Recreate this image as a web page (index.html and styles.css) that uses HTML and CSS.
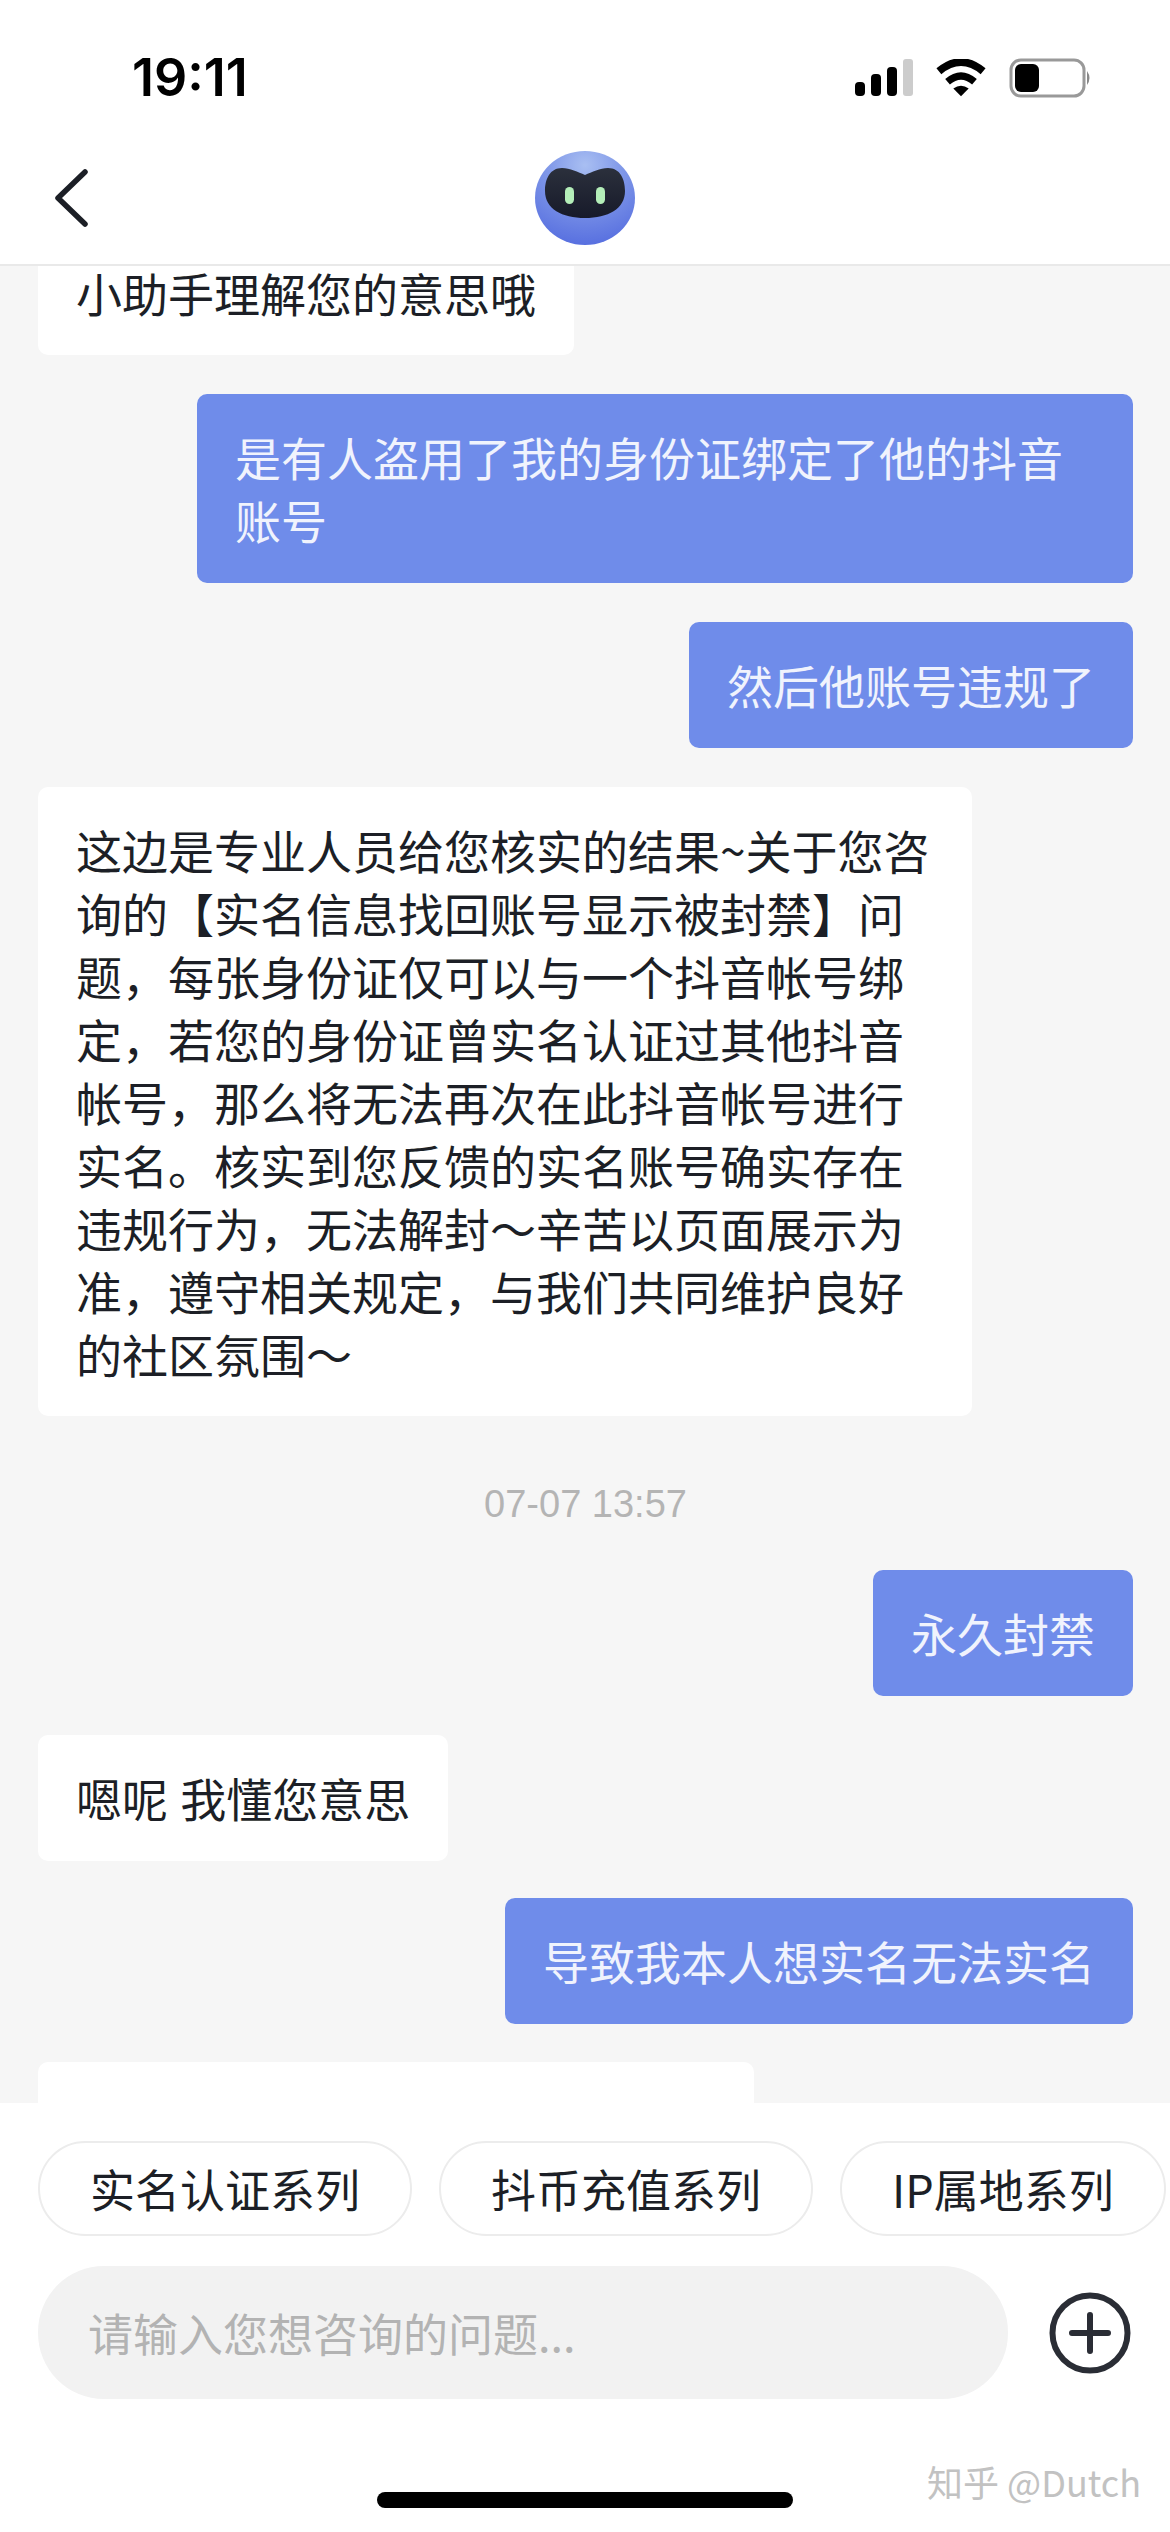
FILE: index.html
```html
<!DOCTYPE html>
<html lang="zh">
<head>
<meta charset="UTF-8">
<meta name="viewport" content="width=device-width, initial-scale=1.0">
<title>chat</title>
<link rel="stylesheet" href="styles.css">
</head>
<body>
    <div class="phone">
        <header class="top">
            <div class="status">
                <span class="time">19:11</span>
                <div class="status-icons">
                    <svg width="58" height="38" viewBox="0 0 58 38">
                        <rect x="0" y="23" width="10" height="14" rx="4" fill="#000"/>
                        <rect x="16" y="15" width="10" height="22" rx="4" fill="#000"/>
                        <rect x="32" y="8" width="10" height="29" rx="4" fill="#000"/>
                        <rect x="48" y="0" width="10" height="37" rx="3" fill="#ccc"/>
                    </svg>
                    <svg width="50" height="38" viewBox="0 0 52 38">
                        <path d="M3 12 Q26 -7 49 12" fill="none" stroke="#000" stroke-width="8"/>
                        <path d="M12 23 Q26 11 40 23" fill="none" stroke="#000" stroke-width="7.5"/>
                        <path d="M18 30 Q26 24 34 30 L26 38 Z" fill="#000"/>
                    </svg>
                    <svg width="82" height="40" viewBox="0 0 82 40">
                        <rect x="2" y="2" width="73" height="36" rx="10" fill="none" stroke="#999" stroke-width="3"/>
                        <rect x="6" y="6" width="24" height="28" rx="6" fill="#000"/>
                        <path d="M78 13 Q83 20 78 27 Z" fill="#888"/>
                    </svg>
                </div>
            </div>
            <div class="nav">
                <svg class="back" width="40" height="60" viewBox="0 0 40 60">
                    <path d="M33 4 L6 30 L33 56" fill="none" stroke="#1c1f26" stroke-width="5.5" stroke-linecap="round" stroke-linejoin="round"/>
                </svg>
                <svg class="avatar" width="102" height="102" viewBox="0 0 102 102">
                    <defs>
                        <radialGradient id="ball" cx="50%" cy="15%" r="85%">
                            <stop offset="0" stop-color="#a9bff2"/>
                            <stop offset="0.45" stop-color="#7f97e8"/>
                            <stop offset="1" stop-color="#5870e0"/>
                        </radialGradient>
                        <linearGradient id="head" x1="0" y1="0" x2="0" y2="1">
                            <stop offset="0" stop-color="#2b303c"/>
                            <stop offset="1" stop-color="#171a2a"/>
                        </linearGradient>
                    </defs>
                    <ellipse cx="51" cy="51" rx="50" ry="47" fill="url(#ball)"/>
                    <path d="M51 28 C44 25 36 21 28 21 C16 21 11 32 11 44 C11 62 28 71 51 71 C74 71 91 62 91 44 C91 32 86 21 74 21 C66 21 58 25 51 28 Z" fill="url(#head)"/>
                    <rect x="31" y="40" width="9" height="17" rx="4.5" fill="#b4eeb9"/>
                    <rect x="62" y="40" width="9" height="17" rx="4.5" fill="#b4eeb9"/>
                </svg>
            </div>
        </header>

        <main class="chat">
            <div class="msg left first">小助手理解您的意思哦</div>
            <div class="msg right long">是有人盗用了我的身份证绑定了他的抖音<br>账号</div>
            <div class="msg right">然后他账号违规了</div>
            <div class="msg left answer">这边是专业人员给您核实的结果~关于您咨<br>询的【实名信息找回账号显示被封禁】问<br>题，每张身份证仅可以与一个抖音帐号绑<br>定，若您的身份证曾实名认证过其他抖音<br>帐号，那么将无法再次在此抖音帐号进行<br>实名。核实到您反馈的实名账号确实存在<br>违规行为，无法解封～辛苦以页面展示为<br>准，遵守相关规定，与我们共同维护良好<br>的社区氛围～</div>
            <div class="stamp">07-07 13:57</div>
            <div class="msg right">永久封禁</div>
            <div class="msg left short">嗯呢 我懂您意思</div>
            <div class="msg right">导致我本人想实名无法实名</div>
            <div class="msg left cut"></div>
        </main>

        <footer class="bottom">
            <div class="chips">
                <span class="chip">实名认证系列</span>
                <span class="chip">抖币充值系列</span>
                <span class="chip">IP属地系列</span>
            </div>
            <div class="input-row">
                <div class="input">请输入您想咨询的问题...</div>
                <svg width="82" height="82" viewBox="0 0 82 82">
                    <circle cx="41" cy="41" r="37.5" fill="none" stroke="#2a2d35" stroke-width="6"/>
                    <path d="M41 23 V59 M23 41 H59" stroke="#2a2d35" stroke-width="6" stroke-linecap="round"/>
                </svg>
            </div>
            <div class="home-row">
                <div class="home-bar"></div>
                <span class="mark">知乎 @Dutch</span>
            </div>
        </footer>
    </div>
</body>
</html>
```

FILE: styles.css
```css
* {
    box-sizing: border-box;
}
body {
    margin: 0;
    background: #fff;
    font-family: "Noto Sans CJK SC", "Liberation Sans", sans-serif;
}
.phone {
    width: 1170px;
    height: 2532px;
    display: flex;
    flex-direction: column;
    overflow: hidden;
}

/* top */
.top {
    height: 266px;
    background: #fff;
    border-bottom: 2px solid #e9e9e9;
    flex-shrink: 0;
}
.status {
    height: 132px;
    padding: 50px 79px 0 132px;
    display: flex;
    justify-content: space-between;
    align-items: flex-start;
}
.time {
    font-family: Inter, "Liberation Sans", sans-serif;
    font-size: 52px;
    font-weight: 600;
    line-height: 56px;
    color: #000;
}
.status-icons {
    display: flex;
    align-items: center;
    gap: 23px;
    padding-top: 8px;
}
.nav {
    height: 132px;
    position: relative;
    display: flex;
    justify-content: center;
    align-items: center;
}
.back {
    position: absolute;
    left: 52px;
    top: 36px;
}

/* messages */
.chat {
    height: 1837px;
    background: #f6f6f6;
    display: flex;
    flex-direction: column;
    gap: 39px;
    padding: 0 37px 0 38px;
    flex-shrink: 0;
}
.msg {
    font-size: 46px;
    line-height: 63px;
    padding: 31px 38px 32px;
    border-radius: 10px;
    white-space: nowrap;
    flex-shrink: 0;
}
.msg.left {
    align-self: flex-start;
    background: #fff;
    color: #1c1f26;
}
.msg.right {
    align-self: flex-end;
    background: #6f8cea;
    color: #f0f3fd;
}
.msg.first {
    line-height: 53px;
    padding: 0 38px 36px;
    border-radius: 0 0 10px 10px;
}
.msg.long {
    width: 936px;
}
.msg.answer {
    width: 934px;
    padding-bottom: 31px;
}
.msg.short {
    word-spacing: 2px;
    margin-bottom: -2px;
}
/* next answer, only its top shows above the footer */
.msg.cut {
    width: 716px;
    height: 44px;
    padding: 0;
    margin-top: -1px;
    border-radius: 10px 10px 0 0;
}
.stamp {
    text-align: center;
    font-family: "Liberation Sans", sans-serif;
    font-size: 38px;
    line-height: 42px;
    color: #b4b4b4;
    margin: 28px 0 6px;
    flex-shrink: 0;
}

/* bottom */
.bottom {
    flex: 1;
    background: #fff;
    padding-top: 38px;
    position: relative;
}
.chips {
    display: flex;
    gap: 27px;
    padding-left: 38px;
}
.chip {
    height: 95px;
    border: 2px solid #ececec;
    border-radius: 48px;
    font-size: 45px;
    color: #1c1f26;
    display: flex;
    align-items: center;
    justify-content: center;
    white-space: nowrap;
    padding: 0 50px;
}
.input-row {
    display: flex;
    align-items: center;
    margin-top: 30px;
    padding-left: 38px;
    gap: 41px;
}
.input {
    width: 970px;
    height: 133px;
    background: #f2f2f2;
    border-radius: 66px;
    padding-left: 50px;
    font-size: 45px;
    color: #b3b3b3;
    display: flex;
    align-items: center;
}
.home-row {
    position: relative;
    display: flex;
    justify-content: center;
    margin-top: 93px;
}
.home-bar {
    width: 416px;
    height: 16px;
    background: #000;
    border-radius: 8px;
}
.mark {
    position: absolute;
    right: 29px;
    top: -37px;
    font-size: 36px;
    color: #c2c2c2;
    white-space: nowrap;
}
```
